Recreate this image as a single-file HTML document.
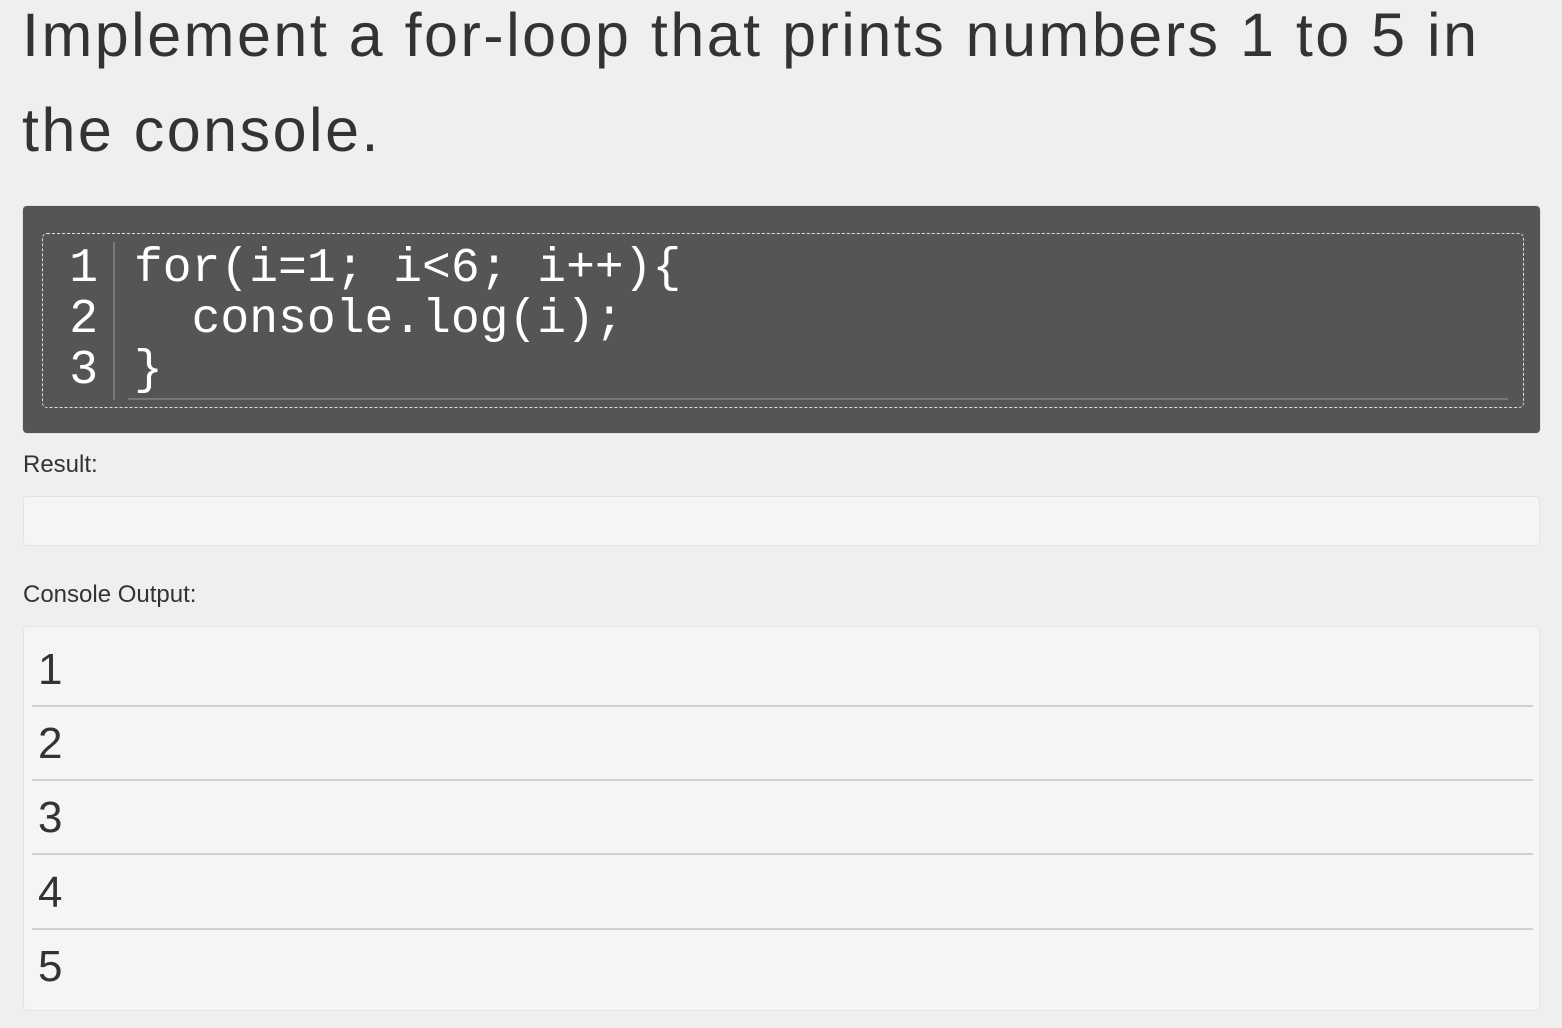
<!DOCTYPE html>
<html><head><style>
body{margin:0;background:#efefef;width:1562px;height:1028px;overflow:hidden;font-family:"Liberation Sans",sans-serif;color:#333}
h1{position:absolute;left:22px;top:-12px;margin:0;font-weight:normal;font-size:61px;line-height:95px;width:1560px;letter-spacing:2.5px;white-space:nowrap}
.code{position:absolute;left:23px;top:206px;width:1517px;height:227px;background:#555;border-radius:4px;box-shadow:0 0 1px #999}
.dash{position:absolute;left:19px;top:27px;width:1480px;height:173px;border:1.5px dashed #ddd;border-radius:5px}
.nums{position:absolute;left:0;top:10px;width:55px;text-align:right;font:48px/51px "Liberation Mono","DejaVu Sans Mono",monospace;color:#fff}
.sep{position:absolute;left:70px;top:8px;width:2px;height:158px;background:#777}
.src{position:absolute;left:91px;top:10px;font:48px/51px "Liberation Mono","DejaVu Sans Mono",monospace;color:#fff;white-space:pre}
.ul{position:absolute;left:85px;top:164px;width:1380px;height:2px;background:#777}
.lbl{position:absolute;left:23px;font-size:24px}
.box{position:absolute;left:23px;width:1515px;background:#f5f5f5;border:1px solid #e3e3e3;border-radius:4px}
.row{position:absolute;left:8px;width:1501px;height:74px;border-bottom:2px solid #d0d0d0;font-size:44px;line-height:74px;padding-left:6px;box-sizing:border-box;color:#333}
</style></head><body>
<h1>Implement a for-loop that prints numbers 1 to 5 in<br>the console.</h1>
<div class="code"><div class="dash">
<div class="nums">1<br>2<br>3</div><div class="sep"></div>
<div class="src">for(i=1; i&lt;6; i++){
  console.log(i);
}</div><div class="ul"></div></div></div>
<div class="lbl" style="top:451px">Result:</div>
<div class="box" style="top:496px;height:48px"></div>
<div class="lbl" style="top:581px">Console Output:</div>
<div class="box" style="top:626px;height:383px">
<div class="row" style="top:6px">1</div>
<div class="row" style="top:80px">2</div>
<div class="row" style="top:154px">3</div>
<div class="row" style="top:229px">4</div>
<div class="row" style="top:303px;border-bottom:none">5</div>
</div>
</body></html>
